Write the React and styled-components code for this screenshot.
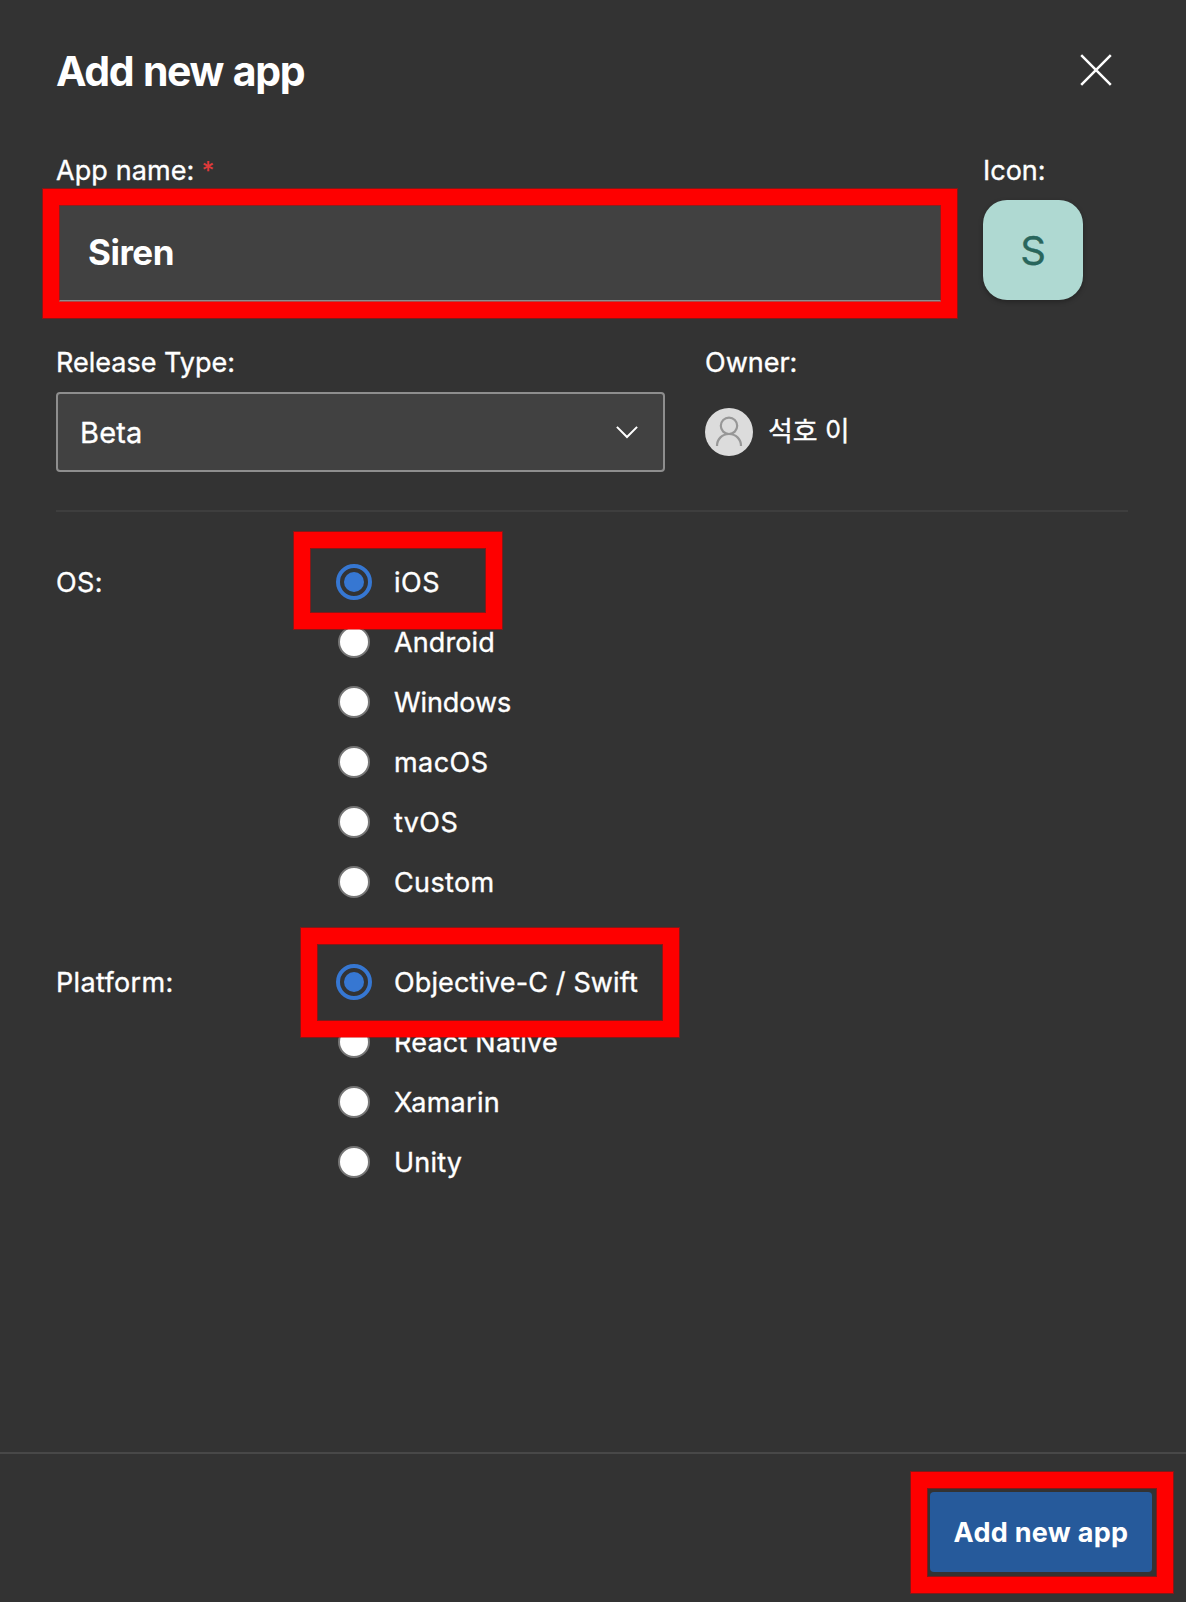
import React, { useState } from "react";
import styled, { createGlobalStyle } from "styled-components";

const GlobalStyle = createGlobalStyle`
  *, *::before, *::after { box-sizing: border-box; }
  body {
    margin: 0;
    background: #333;
    color: #fff;
    font-family: Inter, "Noto Sans CJK KR", sans-serif;
    font-size: 27px;
    font-weight: 400;
    line-height: 40px;
  }
`;

const Panel = styled.form`
  display: flex;
  flex-direction: column;
  width: 1186px;
  height: 1602px;
  overflow: hidden;
`;

const Header = styled.header`
  display: flex;
  justify-content: space-between;
  align-items: flex-start;
  padding: 41px 73px 0 56px;
  height: 102px;
`;

const Title = styled.h1`
  margin: 0;
  font-size: 41px;
  font-weight: 700;
  line-height: 60px;
  letter-spacing: -1.4px;
  word-spacing: 1.5px;
`;

const CloseButton = styled.button`
  display: grid;
  place-items: center;
  width: 34px;
  height: 34px;
  margin-top: 12px;
  padding: 0;
  border: 0;
  background: none;
  color: #fff;
`;

const Body = styled.div`
  flex: 1;
  padding: 49px 58px 0 56px;
`;

const Row = styled.div`
  display: flex;
  height: ${(p) => p.$height}px;
`;

const Field = styled.div`
  display: flex;
  flex-direction: column;
  gap: 9px;
  width: ${(p) => p.$width}px;
`;

const Text = styled.span`
  display: inline-block;
  white-space: pre;
  letter-spacing: ${(p) => p.$track || 0}px;
  -webkit-text-stroke: 0.35px currentColor;
`;

const Required = styled.span`
  margin-left: 7px;
  font-size: 25px;
  font-weight: 500;
  color: #e03a3a;
`;

const Marked = styled.div`
  position: relative;
`;

const Highlight = styled.span`
  position: absolute;
  top: ${(p) => p.$top}px;
  left: ${(p) => p.$left}px;
  width: ${(p) => p.$width}px;
  height: ${(p) => p.$height}px;
  border: 16px solid #fe0000;
  box-shadow: 0 0 0 1px rgba(210, 0, 0, 0.5), inset 0 0 0 1px rgba(210, 0, 0, 0.5);
  z-index: 2;
  pointer-events: none;
`;

const NameInput = styled.input`
  display: block;
  width: 887px;
  height: 102px;
  padding: 3px 31px 0 32px;
  border: 0;
  border-bottom: 2px solid #8e8e8e;
  border-radius: 0;
  outline: 0;
  background: #414141;
  color: #fff;
  font: 700 35px Inter, sans-serif;
  letter-spacing: -0.5px;
`;

const AppIcon = styled.div`
  display: grid;
  place-items: center;
  width: 100px;
  height: 100px;
  padding-top: 2px;
  border-radius: 24px;
  background: #afd9d2;
  color: #29665c;
  font-size: 40px;
  box-shadow: 0 2px 5px rgba(0, 0, 0, 0.3);
`;

const Select = styled.button`
  display: flex;
  align-items: center;
  justify-content: space-between;
  width: 609px;
  height: 80px;
  padding: 0 25px 0 22px;
  border: 2px solid #8e8e8e;
  border-radius: 4px;
  background: #414141;
  color: #fff;
  font: 400 29px Inter, sans-serif;
`;

const Owner = styled.div`
  display: flex;
  align-items: center;
  gap: 15px;
  height: 80px;
`;

const Divider = styled.hr`
  height: 2px;
  margin: 0;
  border: 0;
  background: #3e3e3e;
`;

const Group = styled.section`
  display: flex;
  margin-top: 40px;
`;

const GroupLabel = styled.div`
  width: 280px;
  padding-top: 1px;
  line-height: 60px;
`;

const Option = styled.label`
  position: relative;
  display: flex;
  align-items: center;
  gap: 22px;
  height: 60px;
`;

const OptionText = styled(Text)`
  padding-top: 2px;
`;

const Radio = styled.input`
  appearance: none;
  display: grid;
  place-items: center;
  width: 36px;
  height: 36px;
  margin: 0;
  &::before {
    content: "";
    grid-area: 1 / 1;
    width: 32px;
    height: 32px;
    border-radius: 50%;
    border: 2px solid #767676;
    background: #fff;
  }
  &:checked::before {
    width: 36px;
    height: 36px;
    border: 4px solid #3677d2;
    background: none;
  }
  &:checked::after {
    content: "";
    grid-area: 1 / 1;
    width: 20px;
    height: 20px;
    border-radius: 50%;
    background: #3677d2;
  }
`;

const Footer = styled.footer`
  display: flex;
  justify-content: flex-end;
  height: 150px;
  padding: 38px 34px 0;
  border-top: 2px solid #484848;
`;

const SubmitButton = styled.button`
  width: 222px;
  height: 80px;
  padding: 0;
  border: 0;
  border-radius: 4px;
  background: #265a9b;
  color: #fff;
  font: 700 27px Inter, sans-serif;
  letter-spacing: 0.3px;
`;

const OS_OPTIONS = [
  { label: "iOS", track: 0.5, mark: { $left: -42, $top: -20, $width: 208, $height: 97 } },
  { label: "Android", track: 0.12 },
  { label: "Windows", track: -0.08 },
  { label: "macOS", track: 0.45 },
  { label: "tvOS", track: 0.4 },
  { label: "Custom", track: 0.35 },
];

const PLATFORM_OPTIONS = [
  { label: "Objective-C / Swift", track: 0.12, mark: { $left: -35, $top: -24, $width: 378, $height: 109 } },
  { label: "React Native", track: 0.22 },
  { label: "Xamarin", track: 0.3 },
  { label: "Unity", track: 0.19 },
];

function RadioGroup({ name, title, track, options }) {
  const [value, setValue] = useState(options[0].label);
  return (
    <Group>
      <GroupLabel>
        <Text $track={track}>{title}</Text>
      </GroupLabel>
      <div>
        {options.map((o) => (
          <Option key={o.label}>
            <Radio
              type="radio"
              name={name}
              checked={value === o.label}
              onChange={() => setValue(o.label)}
            />
            <OptionText $track={o.track}>{o.label}</OptionText>
            {o.mark && <Highlight {...o.mark} />}
          </Option>
        ))}
      </div>
    </Group>
  );
}

const CloseIcon = () => (
  <svg width="34" height="34" viewBox="0 0 34 34" fill="none" stroke="currentColor" strokeWidth="2.5">
    <path d="M2.2 2.2 31.8 31.8M31.8 2.2 2.2 31.8" />
  </svg>
);

const ChevronIcon = () => (
  <svg width="22" height="14" viewBox="0 0 22 14" fill="none" stroke="currentColor" strokeWidth="2">
    <path d="M0.9 1.9 11 12 21.1 1.9" />
  </svg>
);

const Avatar = () => (
  <svg width="48" height="48" viewBox="0 0 48 48" fill="none" stroke="#979797" strokeWidth="2.2">
    <circle cx="24" cy="24" r="24" fill="#dcdcdc" stroke="none" />
    <circle cx="24" cy="17.8" r="8.2" />
    <path d="M12 38c0-7 5.2-12 12-12s12 5 12 12" />
  </svg>
);

export default function App() {
  return (
    <>
      <GlobalStyle />
      <Panel onSubmit={(e) => e.preventDefault()}>
        <Header>
          <Title>Add new app</Title>
          <CloseButton type="button" aria-label="Close">
            <CloseIcon />
          </CloseButton>
        </Header>
        <Body>
          <Row $height={192}>
            <Field $width={927}>
              <div>
                <Text $track={0.1}>App name:</Text>
                <Required>*</Required>
              </div>
              <Marked>
                <NameInput type="text" defaultValue="Siren" spellCheck={false} />
                <Highlight $left={-13} $top={-11} $width={914} $height={129} />
              </Marked>
            </Field>
            <Field>
              <Text>Icon:</Text>
              <AppIcon>
                <Text>S</Text>
              </AppIcon>
            </Field>
          </Row>
          <Row $height={167}>
            <Field $width={649}>
              <Text>Release Type:</Text>
              <Select type="button">
                <Text $track={0.2}>Beta</Text>
                <ChevronIcon />
              </Select>
            </Field>
            <Field>
              <Text>Owner:</Text>
              <Owner>
                <Avatar />
                <Text $track={-0.2}>석호 이</Text>
              </Owner>
            </Field>
          </Row>
          <Divider />
          <RadioGroup name="os" title="OS:" track={0.4} options={OS_OPTIONS} />
          <RadioGroup name="platform" title="Platform:" track={0.35} options={PLATFORM_OPTIONS} />
        </Body>
        <Footer>
          <Marked>
            <SubmitButton type="submit">Add new app</SubmitButton>
            <Highlight $left={-19} $top={-20} $width={262} $height={121} />
          </Marked>
        </Footer>
      </Panel>
    </>
  );
}
